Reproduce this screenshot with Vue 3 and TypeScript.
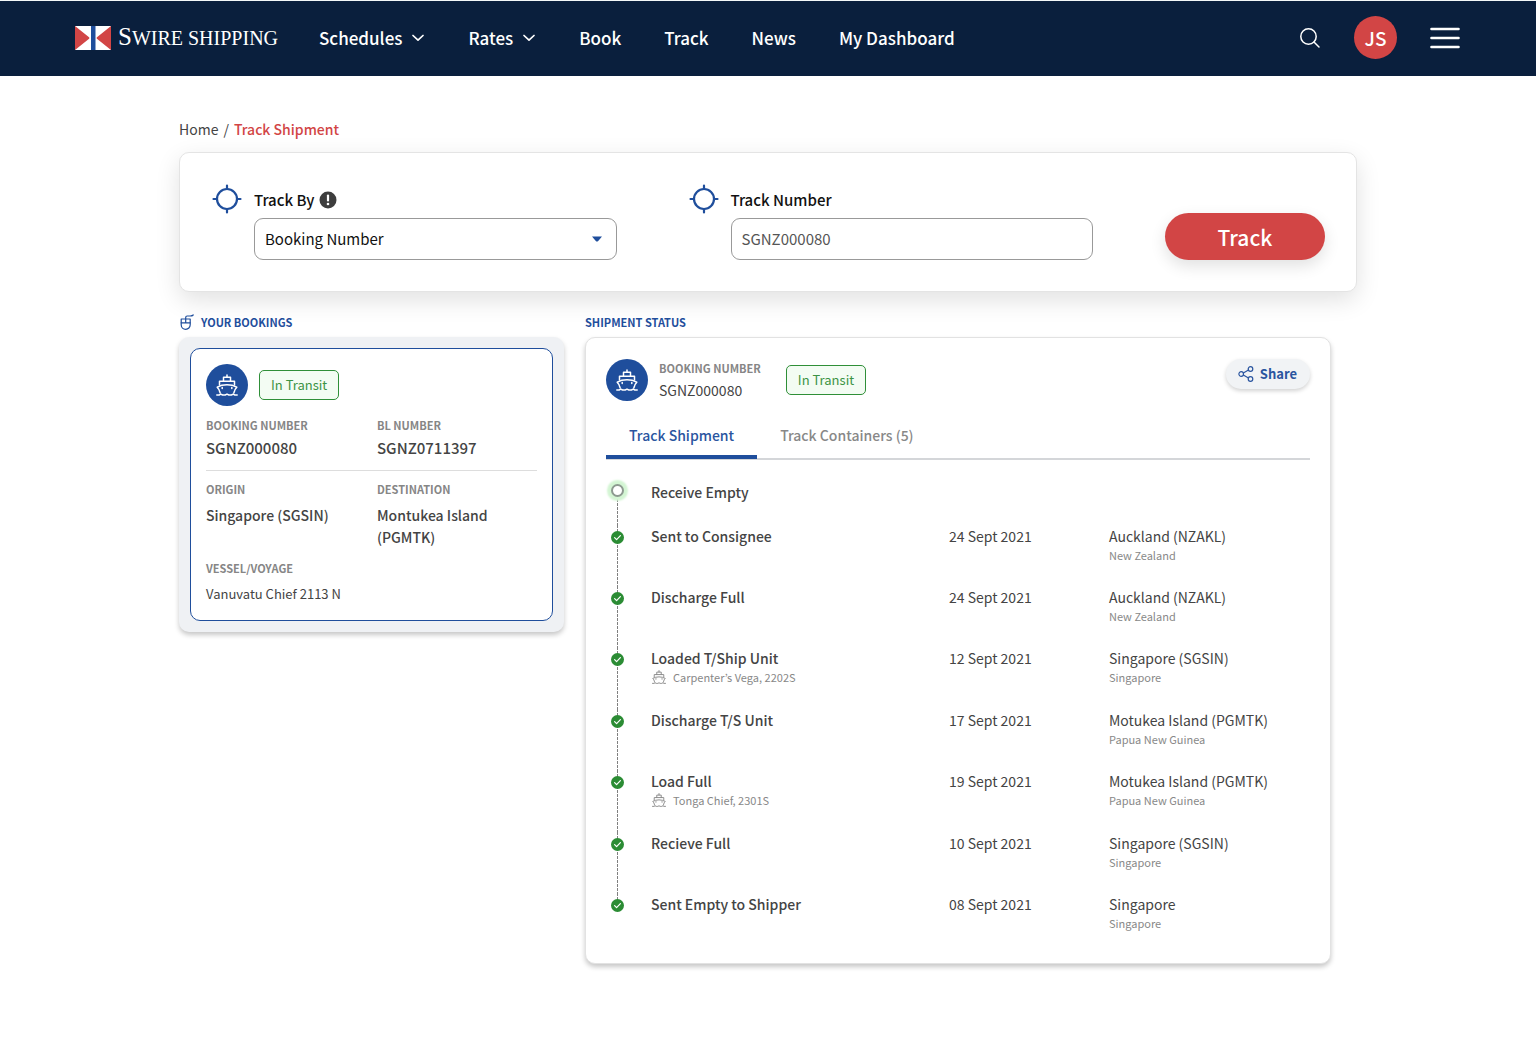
<script setup lang="ts">
import { ref } from 'vue'

interface NavItem {
  label: string
  menu?: boolean
}

interface TrackEvent {
  title: string
  vessel?: string
  date?: string
  place?: string
  country?: string
}

const navItems: NavItem[] = [
  { label: 'Schedules', menu: true },
  { label: 'Rates', menu: true },
  { label: 'Book' },
  { label: 'Track' },
  { label: 'News' },
  { label: 'My Dashboard' },
]

const trackBy = ref('Booking Number')
const trackNumber = ref('SGNZ000080')
const activeTab = ref<'shipment' | 'containers'>('shipment')

const events: TrackEvent[] = [
  { title: 'Receive Empty' },
  { title: 'Sent to Consignee', date: '24 Sept 2021', place: 'Auckland (NZAKL)', country: 'New Zealand' },
  { title: 'Discharge Full', date: '24 Sept 2021', place: 'Auckland (NZAKL)', country: 'New Zealand' },
  { title: 'Loaded T/Ship Unit', vessel: 'Carpenter’s Vega, 2202S', date: '12 Sept 2021', place: 'Singapore (SGSIN)', country: 'Singapore' },
  { title: 'Discharge T/S Unit', date: '17 Sept 2021', place: 'Motukea Island (PGMTK)', country: 'Papua New Guinea' },
  { title: 'Load Full', vessel: 'Tonga Chief, 2301S', date: '19 Sept 2021', place: 'Motukea Island (PGMTK)', country: 'Papua New Guinea' },
  { title: 'Recieve Full', date: '10 Sept 2021', place: 'Singapore (SGSIN)', country: 'Singapore' },
  { title: 'Sent Empty to Shipper', date: '08 Sept 2021', place: 'Singapore', country: 'Singapore' },
]
</script>

<template>
  <div class="page">
    <svg class="sprite" aria-hidden="true">
      <symbol id="ship" viewBox="0 0 22 22">
        <g fill="none" stroke="currentColor" stroke-width="1.500" stroke-linejoin="round" stroke-linecap="round">
          <path d="M11 .900V3M7.500 7V3.300h7V7M3.500 11V7.200h15V11" />
          <path d="M4.200 19 3.600 17.500Q3.400 15.500 1.200 13.200 5.500 10.800 11 10.800t9.800 2.400Q18.600 15.500 18.400 17.500L17.800 19" />
          <path d="M6.200 13.500v1M15.800 13.500v1" />
          <path d="M.800 21h2.400l1.600-.900 1.800.900h2.600l1.800-.900 1.800.900h2.600l1.800-.900 1.600.900h2.400" />
        </g>
      </symbol>
      <symbol id="crosshair" viewBox="0 0 30 30">
        <g fill="none" stroke="currentColor" stroke-width="2.200" stroke-linecap="round">
          <circle cx="15" cy="15" r="10" />
          <path d="M15 1.500V5M15 25v3.500M1.500 15H5M25 15h3.500" />
        </g>
      </symbol>
      <symbol id="chevron" viewBox="0 0 14 8">
        <path d="M2 1.500 7 6.200l5-4.700" fill="none" stroke="currentColor" stroke-width="1.700" stroke-linecap="round" stroke-linejoin="round" />
      </symbol>
    </svg>

    <header class="topbar">
      <a class="brand" href="#" aria-label="Swire Shipping home">
        <svg class="flag" viewBox="0 0 36 24" aria-hidden="true">
          <rect width="36" height="24" fill="#fff" />
          <path d="M0 0 15 12 0 24zM36 0 21 12l15 12z" fill="#d24545" />
          <rect x="14.500" width="7" height="24" fill="#fff" />
          <rect x="16" width="4.500" height="24" fill="#1f4e9c" />
        </svg>
        <span class="wordmark"><span class="wordmark-initial">S</span>WIRE SHIPPING</span>
      </a>
      <nav class="menu" aria-label="Main">
        <a v-for="item in navItems" :key="item.label" href="#" class="menu-link">
          {{ item.label }}
          <svg v-if="item.menu" class="chevron" aria-hidden="true"><use href="#chevron" /></svg>
        </a>
      </nav>
      <div class="tools">
        <button type="button" class="icon-button" aria-label="Search">
          <svg width="22" height="22" viewBox="0 0 22 22" fill="none" stroke="#fff" stroke-width="1.500" stroke-linecap="round">
            <circle cx="9.500" cy="9.500" r="7.700" />
            <path d="m15 15 5 5" />
          </svg>
        </button>
        <button type="button" class="avatar" aria-label="Account">JS</button>
        <button type="button" class="icon-button" aria-label="Menu">
          <svg width="30" height="22" viewBox="0 0 30 22" stroke="#fff" stroke-width="2.600" stroke-linecap="round">
            <path d="M1.500 2h27M1.500 11h27M1.500 20h27" />
          </svg>
        </button>
      </div>
    </header>

    <main class="content">
      <nav class="breadcrumb" aria-label="Breadcrumb">
        <a href="#">Home</a>
        <span>/</span>
        <a href="#" class="current" aria-current="page">Track Shipment</a>
      </nav>

      <form class="search-card" @submit.prevent>
        <div class="field">
          <svg class="crosshair" aria-hidden="true"><use href="#crosshair" /></svg>
          <div class="field-body">
            <label for="track-by" class="field-label">
              Track By
              <svg class="info" viewBox="0 0 18 18" aria-hidden="true">
                <circle cx="9" cy="9" r="8.500" fill="#3d3d3d" />
                <path d="M9 4.500v5" stroke="#fff" stroke-width="2.200" stroke-linecap="round" />
                <circle cx="9" cy="13" r="1.300" fill="#fff" />
              </svg>
            </label>
            <div class="select-wrap">
              <select id="track-by" v-model="trackBy" class="control">
                <option>Booking Number</option>
                <option>BL Number</option>
                <option>Container Number</option>
              </select>
              <svg class="caret" viewBox="0 0 10 6" aria-hidden="true">
                <path d="M0 .500h10L6.200 5q-1.200 1-2.400 0z" fill="#1f4e9c" />
              </svg>
            </div>
          </div>
        </div>
        <div class="field">
          <svg class="crosshair" aria-hidden="true"><use href="#crosshair" /></svg>
          <div class="field-body">
            <label for="track-number" class="field-label">Track Number</label>
            <input id="track-number" v-model="trackNumber" type="text" class="control control-text" />
          </div>
        </div>
        <button type="submit" class="track-button">Track</button>
      </form>

      <div class="columns">
        <section class="bookings">
          <h2 class="section-title">
            <svg class="mouse" viewBox="0 0 15 18" fill="none" stroke="currentColor" stroke-width="1.200" stroke-linecap="round" aria-hidden="true">
              <path d="M2.200 6h9v5.800a4.500 4.500 0 0 1-9 0z" stroke-linejoin="round" />
              <path d="M2.200 9.800h9M6.700 9.800V4.500q0-1.500 1.500-1.500h3q2 0 3-1" />
            </svg>
            YOUR BOOKINGS
          </h2>
          <div class="booking-panel">
            <article class="booking">
              <div class="booking-head">
                <span class="ship-badge"><svg aria-hidden="true"><use href="#ship" /></svg></span>
                <span class="status">In Transit</span>
              </div>
              <dl class="facts facts-top">
                <div>
                  <dt>BOOKING NUMBER</dt>
                  <dd class="strong">SGNZ000080</dd>
                </div>
                <div>
                  <dt>BL NUMBER</dt>
                  <dd class="strong">SGNZ0711397</dd>
                </div>
              </dl>
              <dl class="facts facts-bottom">
                <div>
                  <dt>ORIGIN</dt>
                  <dd>Singapore (SGSIN)</dd>
                </div>
                <div>
                  <dt>DESTINATION</dt>
                  <dd>Montukea Island (PGMTK)</dd>
                </div>
                <div class="wide">
                  <dt>VESSEL/VOYAGE</dt>
                  <dd class="plain">Vanuvatu Chief 2113 N</dd>
                </div>
              </dl>
            </article>
          </div>
        </section>

        <section class="shipment">
          <h2 class="section-title">SHIPMENT STATUS</h2>
          <div class="status-card">
            <div class="status-head">
              <span class="ship-badge"><svg aria-hidden="true"><use href="#ship" /></svg></span>
              <dl class="status-number">
                <dt>BOOKING NUMBER</dt>
                <dd>SGNZ000080</dd>
              </dl>
              <span class="status">In Transit</span>
              <button type="button" class="share">
                <svg viewBox="0 0 16 16" fill="none" stroke="currentColor" stroke-width="1.200" aria-hidden="true">
                  <circle cx="3.200" cy="8" r="2.300" />
                  <circle cx="12.500" cy="3" r="2.300" />
                  <circle cx="12.500" cy="13" r="2.300" />
                  <path d="m5.300 7 5.200-2.900M5.300 9l5.200 2.900" />
                </svg>
                Share
              </button>
            </div>

            <div class="tabs" role="tablist">
              <button type="button" role="tab" class="tab" :class="{ active: activeTab === 'shipment' }" :aria-selected="activeTab === 'shipment'" @click="activeTab = 'shipment'">
                Track Shipment
              </button>
              <button type="button" role="tab" class="tab" :class="{ active: activeTab === 'containers' }" :aria-selected="activeTab === 'containers'" @click="activeTab = 'containers'">
                Track Containers (5)
              </button>
            </div>

            <ol class="timeline">
              <li v-for="(event, index) in events" :key="event.title" class="event" :class="{ 'with-vessel': event.vessel }">
                <span class="rail">
                  <span v-if="index === 0" class="pending"></span>
                  <svg v-else class="done" viewBox="0 0 13 13" aria-hidden="true">
                    <circle cx="6.500" cy="6.500" r="6.500" fill="#2b8c34" />
                    <path d="m3.600 6.700 2 2 3.800-4" fill="none" stroke="#fff" stroke-width="1.200" stroke-linecap="round" stroke-linejoin="round" />
                  </svg>
                </span>
                <div class="event-name">
                  <h3>{{ event.title }}</h3>
                  <p v-if="event.vessel" class="minor">
                    <svg aria-hidden="true"><use href="#ship" /></svg>
                    {{ event.vessel }}
                  </p>
                </div>
                <time class="event-date">{{ event.date }}</time>
                <div class="event-place">
                  <p>{{ event.place }}</p>
                  <p class="minor">{{ event.country }}</p>
                </div>
              </li>
            </ol>
          </div>
        </section>
      </div>
    </main>
  </div>
</template>

<style>
body {
  background: #fff;
}
</style>

<style scoped>
.page {
  font-family: 'Noto Sans CJK KR', 'Noto Sans', sans-serif;
  font-size: 14px;
  line-height: 22px;
  color: #444;
}

.page * {
  box-sizing: border-box;
}

h2,
h3,
p,
dl,
dd,
ol {
  margin: 0;
  padding: 0;
}

a {
  color: inherit;
  text-decoration: none;
}

button {
  border: 0;
  font-family: inherit;
  cursor: pointer;
}

.sprite {
  position: absolute;
  width: 0;
  height: 0;
}

.topbar {
  display: flex;
  align-items: center;
  height: 76px;
  padding: 0 76px 2px 75px;
  border-top: 1px solid #f4f8f8;
  background: #0a1f3d;
  color: #fff;
}

.brand {
  display: flex;
  align-items: center;
  gap: 7px;
}

.flag {
  width: 36px;
  height: 24px;
}

.wordmark {
  font-family: 'Liberation Serif', serif;
  font-size: 20px;
  line-height: 26px;
  white-space: nowrap;
}

.wordmark-initial {
  font-size: 25px;
}

.menu {
  display: flex;
  gap: 43px;
  margin-left: 41px;
}

.menu-link {
  display: flex;
  align-items: center;
  gap: 9px;
  font-size: 17px;
  font-weight: 500;
  line-height: 24px;
  white-space: nowrap;
}

.chevron {
  width: 14px;
  height: 8px;
}

.tools {
  display: flex;
  align-items: center;
  gap: 33px;
  margin-left: auto;
}

.icon-button {
  display: flex;
  padding: 0;
  background: none;
}

.avatar {
  width: 43px;
  height: 43px;
  padding: 0;
  border-radius: 50%;
  background: #d24545;
  color: #fff;
  font-size: 19px;
  font-weight: 500;
}

.content {
  max-width: 1178px;
  margin: 0 auto;
  padding: 41px 0 79px;
}

.breadcrumb {
  display: flex;
  gap: 5px;
  font-size: 14px;
  line-height: 24px;
}

.breadcrumb .current {
  color: #d24545;
  font-weight: 500;
}

.search-card {
  display: flex;
  align-items: flex-end;
  gap: 72px;
  margin-top: 11px;
  padding: 35px 31px 31px 32px;
  border: 1px solid #e4e4e4;
  border-radius: 10px;
  background: #fff;
  box-shadow: 0 8px 24px rgba(0, 0, 0, 0.12);
}

.field {
  display: flex;
  flex: 1;
  gap: 12px;
}

.crosshair {
  flex: none;
  width: 30px;
  height: 30px;
  margin-top: -4px;
  color: #1f4e9c;
}

.field-body {
  flex: 1;
}

.field-label {
  display: flex;
  align-items: center;
  gap: 5px;
  margin-bottom: 6px;
  color: #111;
  font-size: 15px;
  font-weight: 500;
  line-height: 24px;
}

.info {
  width: 18px;
  height: 18px;
}

.select-wrap {
  position: relative;
}

.control {
  display: block;
  width: 100%;
  height: 42px;
  padding: 0 10px 2px;
  border: 1px solid #999;
  border-radius: 9px;
  appearance: none;
  background: #fff;
  color: #111;
  font-family: inherit;
  font-size: 15px;
}

.control-text {
  color: #555;
}

.caret {
  position: absolute;
  top: 18px;
  right: 15px;
  width: 10px;
  height: 6px;
}

.track-button {
  width: 160px;
  height: 47px;
  padding: 0;
  border-radius: 24px;
  background: #d24545;
  box-shadow: 0 6px 16px rgba(0, 0, 0, 0.12);
  color: #fff;
  font-size: 21px;
  font-weight: 500;
}

.columns {
  display: grid;
  grid-template-columns: 385fr 746fr;
  gap: 21px;
  align-items: start;
  margin: 20px 26px 0 0;
}

.section-title {
  display: flex;
  align-items: center;
  gap: 7px;
  margin-bottom: 5px;
  color: #1f4e9c;
  font-size: 11px;
  font-weight: 700;
  line-height: 20px;
}

.mouse {
  width: 15px;
  height: 18px;
}

.booking-panel {
  padding: 11px;
  border-radius: 10px;
  background: #eff1f4;
  box-shadow: 0 3px 5px rgba(0, 0, 0, 0.22);
}

.booking {
  padding: 15px;
  border: 1px solid #1f4e9c;
  border-radius: 10px;
  background: #fff;
}

.booking-head {
  display: flex;
  align-items: center;
  gap: 11px;
}

.ship-badge {
  display: flex;
  align-items: center;
  justify-content: center;
  width: 42px;
  height: 42px;
  border-radius: 50%;
  background: #1f4e9c;
  color: #fff;
}

.ship-badge svg {
  width: 22px;
  height: 22px;
}

.status {
  padding: 2px 11px;
  border: 1px solid #2f8f38;
  border-radius: 5px;
  background: #f3fcf3;
  color: #3c9344;
  font-size: 13px;
  line-height: 24px;
}

dt {
  color: #868686;
  font-size: 11px;
  font-weight: 700;
  line-height: 16px;
}

.facts {
  display: grid;
  grid-template-columns: 171fr 160fr;
  row-gap: 12px;
}

.facts dd {
  margin-top: 7px;
  font-weight: 500;
}

.facts .strong {
  margin-top: 4px;
  font-size: 15px;
}

.facts .plain {
  font-size: 13px;
  font-weight: 400;
}

.facts-top {
  padding: 11px 0;
  border-bottom: 1px solid #ddd;
}

.facts-bottom {
  padding-top: 10px;
}

.wide {
  grid-column: 1 / -1;
}

.status-card {
  padding: 21px 20px 32px;
  border: 1px solid #e2e2e2;
  border-radius: 10px;
  background: #fff;
  box-shadow: 0 3px 5px rgba(0, 0, 0, 0.22);
}

.status-head {
  display: flex;
  align-items: center;
}

.status-number {
  margin: 0 25px 0 11px;
}

.status-number dd {
  margin-top: 3px;
}

.share {
  display: flex;
  align-items: center;
  align-self: flex-start;
  gap: 6px;
  margin-left: auto;
  padding: 0 13px 0 12px;
  border-radius: 15px;
  background: #f1f3f5;
  box-shadow: 0 2px 4px rgba(0, 0, 0, 0.18);
  color: #2a559f;
  font-size: 13px;
  font-weight: 700;
  line-height: 30px;
}

.share svg {
  width: 16px;
  height: 16px;
}

.tabs {
  display: flex;
  margin-top: 22px;
  border-bottom: 2px solid #d4d6d9;
}

.tab {
  margin-bottom: -1px;
  padding: 0 23px 8px;
  border-bottom: 4px solid transparent;
  background: none;
  color: #888;
  font-size: 14px;
  font-weight: 500;
  line-height: 24px;
}

.tab.active {
  border-bottom-color: #1f4e9c;
  color: #2a559f;
}

.timeline {
  margin-top: 21px;
  list-style: none;
}

.event {
  display: grid;
  grid-template-columns: 45fr 298fr 160fr 201fr;
  min-height: 61px;
}

.event.with-vessel {
  min-height: 62px;
}

.event:first-child {
  min-height: 44px;
}

.event:last-child {
  min-height: 0;
}

.rail {
  display: flex;
  justify-content: center;
  width: 23px;
  background: repeating-linear-gradient(#808080 0 3px, #fff 3px 4px) center top / 1px 100% no-repeat;
}

.event:first-child .rail {
  background-position: center 10px;
}

.event:last-child .rail {
  background-size: 1px 8px;
}

.pending {
  width: 13px;
  height: 13px;
  margin-top: 3px;
  border: 2px solid #8d9a90;
  border-radius: 50%;
  background: #fff;
  box-shadow: 0 0 2px 4px #d3f5d3;
}

.done {
  width: 13px;
  height: 13px;
  margin-top: 6px;
}

.event h3 {
  font-size: 14px;
  font-weight: 500;
}

.event .minor {
  display: flex;
  align-items: center;
  gap: 6px;
  color: #888;
  font-size: 11px;
  line-height: 16px;
}

.minor svg {
  width: 16px;
  height: 14px;
}
</style>
